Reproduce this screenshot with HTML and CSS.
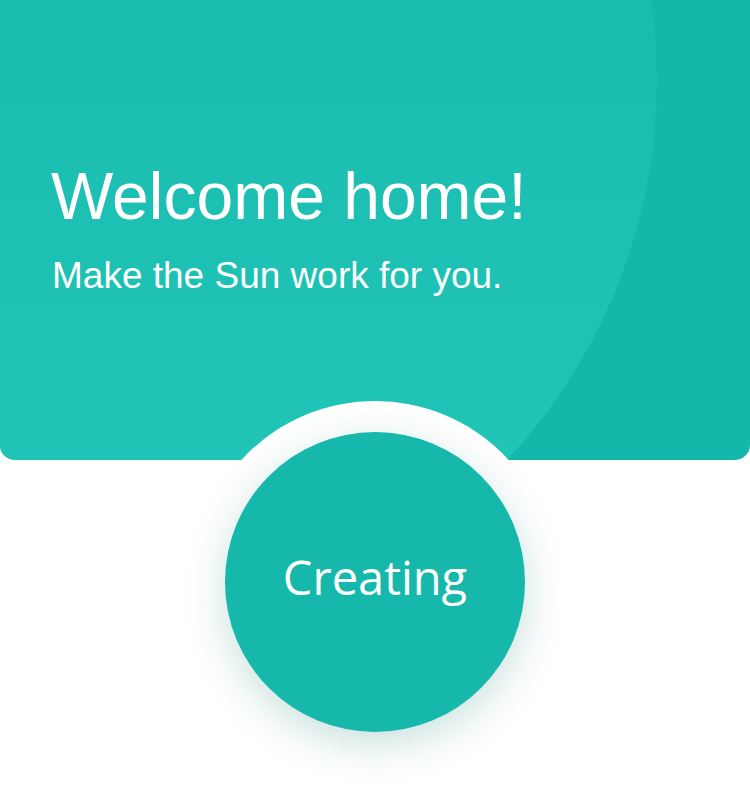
FILE: index.html
```html
<!DOCTYPE html>
<html lang="en">
<head>
<meta charset="utf-8">
<title>Welcome home</title>
<link rel="stylesheet" href="styles.css">
</head>
<body>
  <header class="hero">
    <div class="hero-glow"></div>
    <div class="hero-text">
      <h1 class="hero-title">Welcome home!</h1>
      <p class="hero-sub">Make the Sun work for you.</p>
    </div>
  </header>
  <section class="action">
    <div class="ring">
      <button class="create-btn">Creating</button>
    </div>
  </section>
</body>
</html>
```
FILE: styles.css
```css
html, body {
  margin: 0;
  padding: 0;
  background: #ffffff;
}

body {
  width: 750px;
  height: 789px;
  overflow: hidden;
  font-family: "Liberation Sans", Arial, sans-serif;
}

.hero {
  position: relative;
  height: 460px;
  background: #14b8aa;
  border-radius: 0 0 15px 15px;
  overflow: hidden;
}

.hero-glow {
  position: absolute;
  left: -455px;
  top: -476px;
  width: 1112px;
  height: 1112px;
  border-radius: 50%;
  background: linear-gradient(180deg, #18bbae 0%, #19bcaf 42.8%, #21c5b7 84.2%, #22c6b8 100%);
}

.hero-text {
  position: relative;
  padding: 163px 0 0 51px;
  color: #ffffff;
}

.hero-title {
  margin: 0;
  font-size: 66px;
  line-height: 1;
  font-weight: 400;
}

.hero-sub {
  margin: 28px 0 0 1px;
  font-size: 37px;
  line-height: 1;
  font-weight: 400;
}

.action {
  display: flex;
  justify-content: center;
  margin-top: -59px;
  position: relative;
}

.ring {
  width: 362px;
  height: 362px;
  box-sizing: border-box;
  padding: 31px;
  border-radius: 50%;
  background: #ffffff;
}

.create-btn {
  width: 300px;
  height: 300px;
  box-sizing: border-box;
  padding: 0 0 10px 0;
  border: none;
  border-radius: 50%;
  background: #15b8aa;
  box-shadow: 0 12px 40px rgba(10, 120, 105, 0.22);
  color: #ffffff;
  font-family: "Open Sans", sans-serif;
  font-size: 47px;
  line-height: 1;
  font-weight: 400;
  display: flex;
  align-items: center;
  justify-content: center;
}
```
